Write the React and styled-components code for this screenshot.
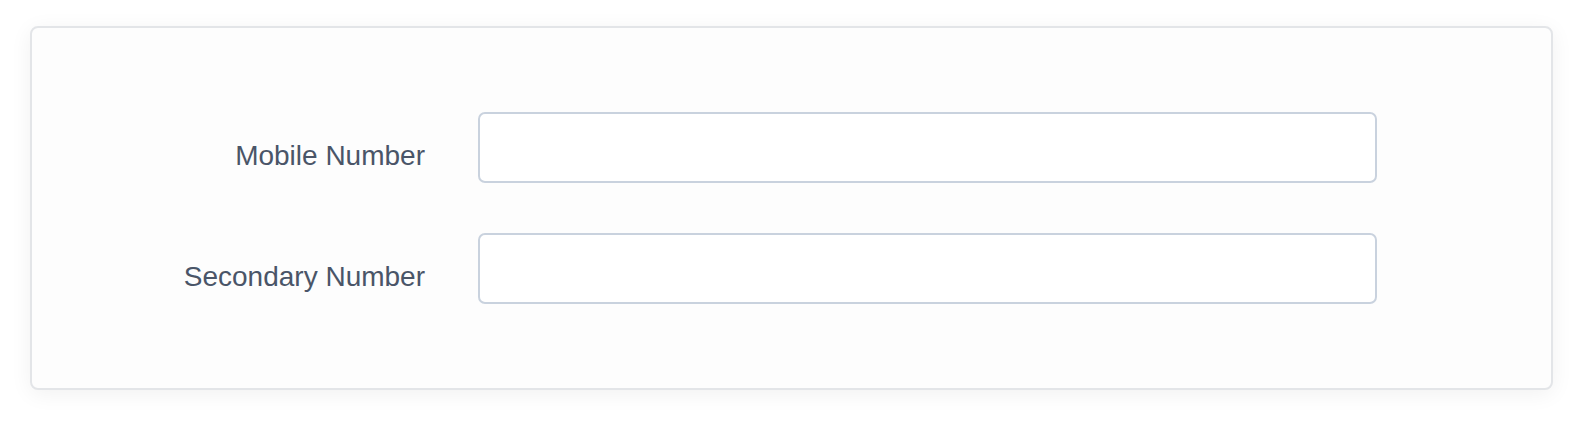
import React from "react";
import styled, { createGlobalStyle } from "styled-components";

const Global = createGlobalStyle`
  html, body { margin: 0; padding: 0; background: #ffffff; }
  body { font-family: "Liberation Sans", Arial, sans-serif; }
`;

const Page = styled.div`
  padding: 26px 31px 35px 30px;
`;

const Card = styled.div`
  background: #fdfdfd;
  border: 2px solid #e3e5e8;
  border-radius: 8px;
  box-shadow: 0 4px 22px rgba(0, 0, 0, 0.06);
  padding: 84px 0;
`;

const Form = styled.div`
  display: grid;
  grid-template-columns: 393px 899px;
  column-gap: 53px;
  row-gap: 50px;
`;

const Label = styled.label`
  text-align: right;
  font-size: 28px;
  line-height: 32px;
  color: #4a5568;
  padding-top: 28px;
`;

const Input = styled.input`
  box-sizing: border-box;
  height: 71px;
  width: 100%;
  border: 2px solid #c9d2de;
  border-radius: 7px;
  background: #ffffff;
  font-family: inherit;
  font-size: 28px;
  color: #4a5568;
  padding: 0 18px;
  outline: none;
`;

const fields = [
  { id: "mobile", label: "Mobile Number" },
  { id: "secondary", label: "Secondary Number" },
];

export default function App() {
  return (
    <>
      <Global />
      <Page>
        <Card>
          <Form>
            {fields.map((f) => (
              <React.Fragment key={f.id}>
                <Label htmlFor={f.id}>{f.label}</Label>
                <Input id={f.id} type="tel" />
              </React.Fragment>
            ))}
          </Form>
        </Card>
      </Page>
    </>
  );
}
